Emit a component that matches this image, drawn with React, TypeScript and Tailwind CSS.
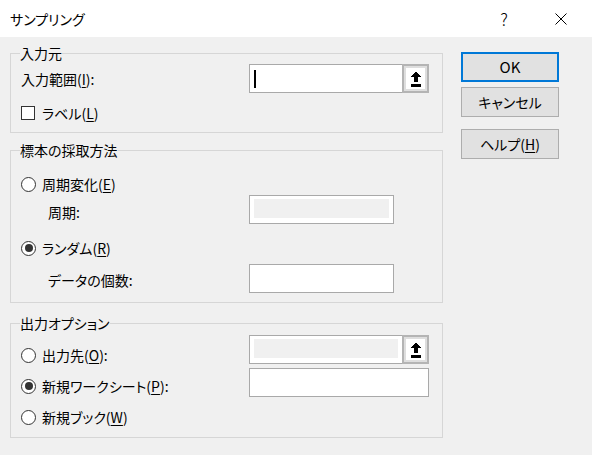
import type { ReactNode } from 'react';

const font = "font-['Noto_Sans_CJK_JP','Noto_Sans',sans-serif] [font-feature-settings:'palt']";

function Key({ c }: { c: string }) {
  return <span className="underline underline-offset-[2px] decoration-1">{c}</span>;
}

function Radio({ checked = false }: { checked?: boolean }) {
  return (
    <span className="w-[15px] h-[15px] rounded-full border border-[#333] bg-white flex items-center justify-center shrink-0">
      {checked && <span className="w-[8px] h-[8px] rounded-full bg-[#333]" />}
    </span>
  );
}

function Checkbox() {
  return <span className="w-[14px] h-[14px] border border-[#333] bg-white shrink-0" />;
}

function RefIcon() {
  return (
    <svg width="10" height="16" viewBox="0 0 10 16" shapeRendering="crispEdges">
      <polygon points="5,0 10,6 7,6 7,11 3,11 3,6 0,6" fill="#000" />
      <rect x="0" y="13" width="10" height="3" fill="#000" />
    </svg>
  );
}

// text box with the collapse button at its right end
function RefInput({ disabled = false, caret = false }: { disabled?: boolean; caret?: boolean }) {
  return (
    <div className="w-[180px] h-[29px] flex">
      <div className="flex-1 border border-r-0 border-[#a9a9a9] bg-white flex items-center">
        {caret && <span className="ml-[4px] w-[2px] h-[18px] bg-black" />}
        {disabled && <span className="mx-[4px] mt-[-2px] flex-1 h-[19px] bg-[#f0f0f0]" />}
      </div>
      <div className="w-[27px] border-2 border-[#b4b4b4] bg-[#dedede] p-[2px]">
        <div className="w-full h-full bg-white flex items-center justify-center">
          <RefIcon />
        </div>
      </div>
    </div>
  );
}

function TextBox({ disabled = false, wide = false }: { disabled?: boolean; wide?: boolean }) {
  return (
    <div
      className={
        (wide ? 'w-[180px]' : 'w-[145px]') +
        ' h-[29px] border border-[#a9a9a9] bg-white flex items-center'
      }
    >
      {disabled && <span className="mx-[4px] mt-[-2px] flex-1 h-[19px] bg-[#f0f0f0]" />}
    </div>
  );
}

function Group({ title, className, children }: { title: string; className: string; children: ReactNode }) {
  return (
    <fieldset className={'ml-[10px] w-[433px] border border-[#d6d6d6] px-[9px] ' + className}>
      <legend className="px-0 leading-[20px]">{title}</legend>
      {children}
    </fieldset>
  );
}

function Button({ children, primary = false, className = '' }: { children: ReactNode; primary?: boolean; className?: string }) {
  return (
    <button
      className={
        'w-[98px] h-[30px] bg-[#e1e1e1] flex items-center justify-center ' +
        (primary ? 'border-2 border-[#0078d7] text-[15px] ' : 'border border-[#adadad] ') +
        className
      }
    >
      {children}
    </button>
  );
}

export default function App() {
  return (
    <div className={'w-[592px] h-[455px] bg-[#f0f0f0] text-black text-[14px] leading-[20px] overflow-hidden ' + font}>
      {/* title bar */}
      <div className="h-[37px] bg-white flex items-center">
        <span className="pl-[10px] text-[14px]">サンプリング</span>
        <span className="ml-auto mr-[47px] text-[17px] font-light">?</span>
        <svg width="12" height="12" viewBox="0 0 12 12" className="mr-[25px]">
          <path d="M0.5 0.5 L11.5 11.5 M11.5 0.5 L0.5 11.5" stroke="#000" strokeWidth="1" />
        </svg>
      </div>

      <div className="flex">
        <div className="flex flex-col">
          <Group title="入力元" className="mt-[6px] pb-[9px]">
            <div className="mt-[1px] h-[29px] flex items-center">
              <span className="w-[229px] pl-px">
                入力範囲(<Key c="I" />):
              </span>
              <RefInput caret />
            </div>
            <div className="mt-[10px] h-[20px] flex items-center gap-[7px] pl-px">
              <Checkbox />
              <span>
                ラベル(<Key c="L" />)
              </span>
            </div>
          </Group>

          <Group title="標本の採取方法" className="mt-[7px] pb-[9px]">
            <div className="mt-[14px] h-[20px] flex items-center gap-[6px] pl-px">
              <Radio />
              <span>
                周期変化(<Key c="E" />)
              </span>
            </div>
            <div className="mt-[1px] h-[29px] flex items-center">
              <span className="w-[229px] pl-[28px] mt-[4px]">周期:</span>
              <TextBox disabled />
            </div>
            <div className="mt-[14px] h-[20px] flex items-center gap-[6px] pl-px">
              <Radio checked />
              <span>
                ランダム(<Key c="R" />)
              </span>
            </div>
            <div className="mt-[6px] h-[29px] flex items-center">
              <span className="w-[229px] pl-[28px] mt-[2px]">データの個数:</span>
              <TextBox />
            </div>
          </Group>

          <Group title="出力オプション" className="mt-[10px] pb-[10px]">
            <div className="mt-[2px] h-[29px] flex items-center">
              <span className="w-[229px] flex items-center gap-[6px] pl-px mt-[11px]">
                <Radio />
                <span>
                  出力先(<Key c="O" />):
                </span>
              </span>
              <RefInput disabled />
            </div>
            <div className="mt-[4px] h-[29px] flex items-center">
              <span className="w-[229px] flex items-center gap-[6px] pl-px mt-[7px]">
                <Radio checked />
                <span>
                  新規ワークシート(<Key c="P" />):
                </span>
              </span>
              <TextBox wide />
            </div>
            <div className="mt-[10px] h-[20px] flex items-center gap-[6px] pl-px">
              <Radio />
              <span>
                新規ブック(<Key c="W" />)
              </span>
            </div>
          </Group>
        </div>

        <div className="ml-[18px] pt-[15px] flex flex-col">
          <Button primary>OK</Button>
          <Button className="mt-[5px]">キャンセル</Button>
          <Button className="mt-[12px]">
            <span>
              ヘルプ(<Key c="H" />)
            </span>
          </Button>
        </div>
      </div>
    </div>
  );
}
